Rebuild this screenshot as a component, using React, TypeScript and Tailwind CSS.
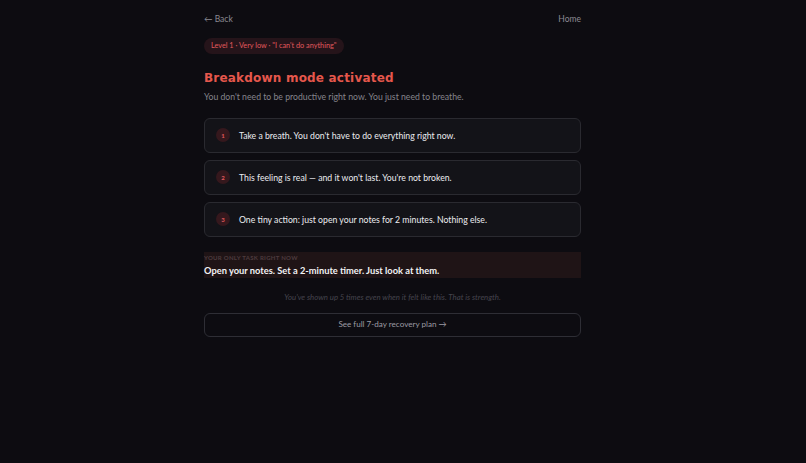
import React from "react";

const steps = [
  "Take a breath. You don't have to do everything right now.",
  "This feeling is real — and it won't last. You're not broken.",
  "One tiny action: just open your notes for 2 minutes. Nothing else.",
];

export default function App() {
  return (
    <div
      className="min-h-[463px] w-full bg-[#0d0c11] flex justify-center pr-[21px]"
      style={{ fontFamily: "Lato, 'Noto Sans', sans-serif" }}
    >
      <div className="w-[377px] flex flex-col pt-[13px]">
        <div className="flex justify-between items-center h-[12px] text-[8.5px] text-[#8b8a92]">
          <span>← Back</span>
          <span>Home</span>
        </div>
        <div className="mt-[13px] flex">
          <span className="rounded-full bg-[#25141a] text-[#e0585c] text-[7.3px] h-[16px] px-[7px] flex items-center">
            Level 1 · Very low · "I can't do anything"
          </span>
        </div>
        <h1
          className="mt-[18px] text-[#e5574c] text-[12px] font-bold leading-none tracking-[0.2px]"
          style={{ fontFamily: "'DejaVu Sans', sans-serif" }}
        >
          Breakdown mode activated
        </h1>
        <p className="mt-[9px] text-[8.7px] text-[#85848c] leading-none">
          You don't need to be productive right now. You just need to breathe.
        </p>
        <div className="mt-[16px] flex flex-col gap-[7px]">
          {steps.map((s, i) => (
            <div
              key={i}
              className="h-[35px] rounded-[6px] border border-[#2a2a30] bg-[#131318] flex items-center pl-[11px]"
            >
              <span className="w-[14px] h-[14px] rounded-full bg-[#35181d] text-[#e0585c] text-[6px] font-bold flex items-center justify-center">
                {i + 1}
              </span>
              <span className="ml-[9px] text-[8.7px] text-[#ececf0]">{s}</span>
            </div>
          ))}
        </div>
        <div className="mt-[15px] bg-[#1f1416] h-[26px] flex flex-col justify-center">
          <div className="text-[6px] font-bold tracking-[0.3px] text-[#4d3b3e] leading-none">
            YOUR ONLY TASK RIGHT NOW
          </div>
          <div className="mt-[5px] text-[9.3px] font-bold text-[#f2f2f4] leading-none">
            Open your notes. Set a 2-minute timer. Just look at them.
          </div>
        </div>
        <p className="mt-[16px] text-center italic text-[7.8px] text-[#45444d] leading-none">
          You've shown up 5 times even when it felt like this. That is strength.
        </p>
        <button className="mt-[11px] h-[24px] rounded-[6px] border border-[#2e2e35] text-[8.1px] text-[#9c9ba3] flex items-center justify-center">
          See full 7-day recovery plan →
        </button>
      </div>
    </div>
  );
}
